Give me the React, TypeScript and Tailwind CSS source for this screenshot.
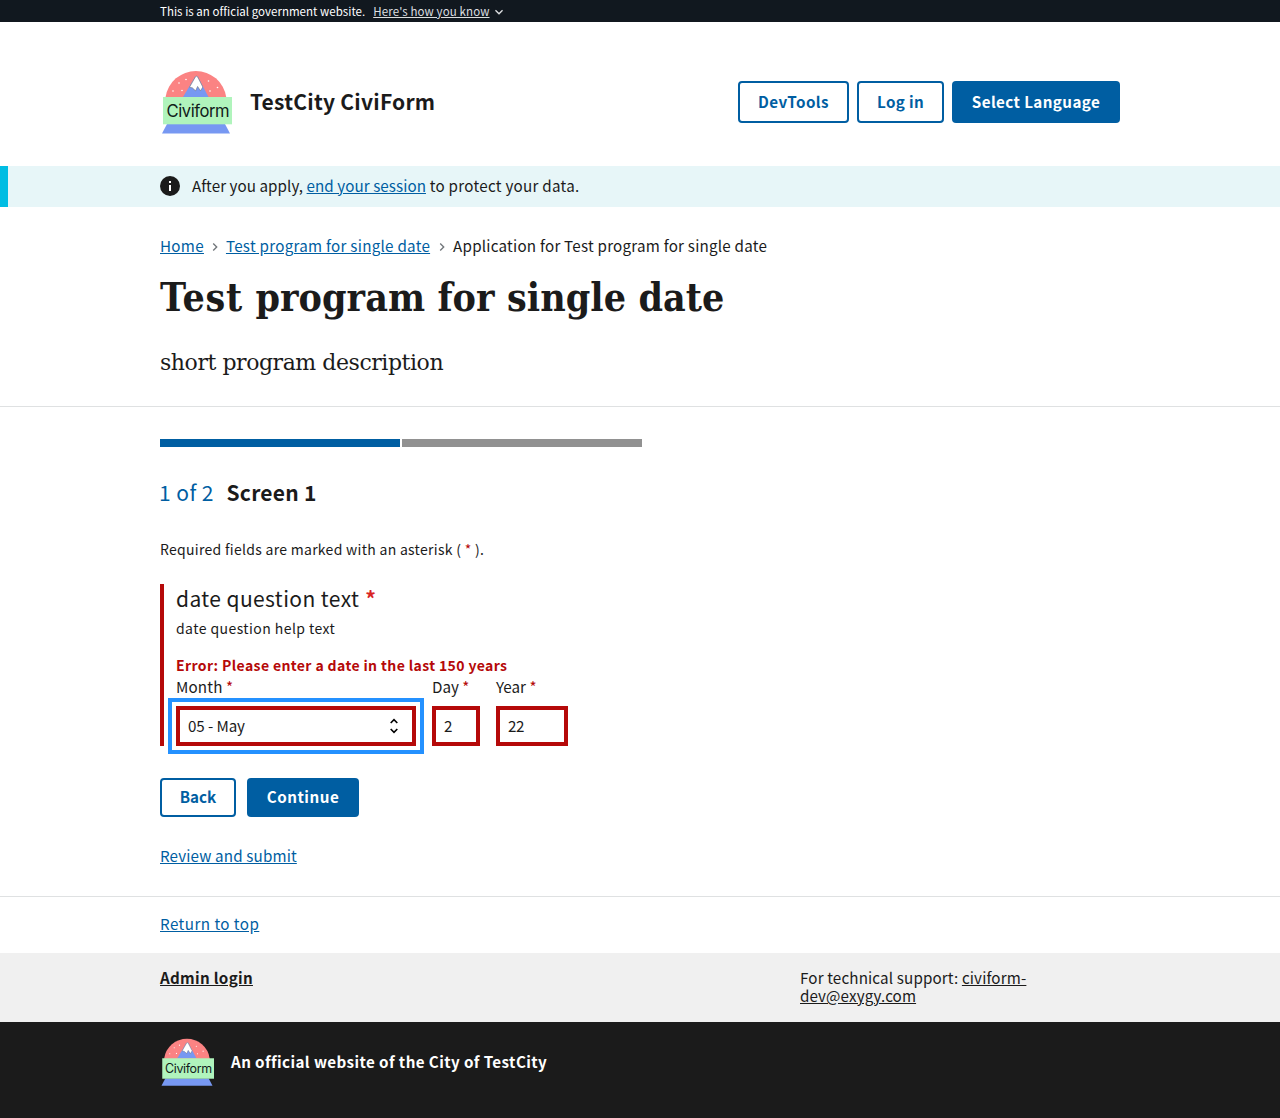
import type { ReactNode } from 'react';

function Logo({ className }: { className: string }) {
  return (
    <svg viewBox="0 0 72 72" className={className} role="img" aria-label="Civiform">
      <path d="M5.6 32 V31 A30.65 30.65 0 0 1 66.2 31 V32 Z" fill="#fb8383" />
      <path d="M23 31 L35 11 Q36.5 9 38 11 L48.5 31 Z" fill="#7798f2" />
      <path d="M29.5 21.3 L35.4 10.9 Q36.5 9.4 37.6 10.9 L42.8 21 L40.5 24.8 L37.6 20.4 L35.6 24.8 L32.3 21.8 Z" fill="#fff" stroke="#666" strokeWidth="0.5" />
      <g fill="#fff">
        <circle cx="19" cy="17" r="0.8" />
        <circle cx="26" cy="13.5" r="0.8" />
        <circle cx="13" cy="25" r="0.8" />
        <circle cx="22" cy="24.5" r="0.8" />
        <circle cx="48.5" cy="15" r="0.8" />
        <circle cx="57.5" cy="21.5" r="0.8" />
        <circle cx="50" cy="25" r="0.8" />
      </g>
      <path d="M7 58 H65 L70 67.5 H2 Z" fill="#7798f2" />
      <rect x="3" y="31" width="69" height="27.3" fill="#b0f4bc" />
      <text x="6.6" y="51" textLength="63" fontFamily="Inter, sans-serif" fontSize="16.6" fill="#10201a">Civiform</text>
    </svg>
  );
}

function Container({ className = '', children }: { className?: string; children: ReactNode }) {
  return <div className={'mx-auto w-[960px] ' + className}>{children}</div>;
}

function Chevron({ className }: { className: string }) {
  return (
    <svg viewBox="0 0 24 24" className={className} fill="currentColor">
      <path d="M10 6 8.59 7.41 13.17 12l-4.58 4.59L10 18l6-6z" />
    </svg>
  );
}

const link = 'text-[#005ea2] underline underline-offset-1 ';
const outlineButton =
  'flex items-center justify-center rounded border-2 border-[#005ea2] bg-white font-bold text-[#005ea2] ';
const solidButton = 'flex items-center justify-center rounded bg-[#005ea2] font-bold text-white ';

export default function App() {
  return (
    <div className="h-[1118px] overflow-hidden bg-white font-['Noto_Sans_CJK_SC',sans-serif] text-[15.2px] leading-[18px] whitespace-nowrap text-[#1b1b1b]">
      <div className="h-[22px] bg-[#11181f] text-white">
        <Container className="flex h-[22px] items-center text-[11.5px]">
          <span className="tracking-[0.03px]">This is an official government website.</span>
          <a className="ml-2 tracking-[0.12px] text-[#dcdee0] underline underline-offset-1">Here's how you know</a>
          <Chevron className="mt-[2px] ml-[1px] size-4 rotate-90 text-[#dcdee0]" />
        </Container>
      </div>

      <header className="h-[144px]">
        <Container className="flex items-center pt-[44px]">
          <Logo className="size-[72px]" />
          <span className="ml-[18px] pb-[2px] text-[21px] font-bold tracking-[0.24px]">TestCity CiviForm</span>
          <div className="ml-auto flex gap-2">
            <button className={outlineButton + 'h-[42px] w-[111px] pb-[2px] tracking-[0.45px]'}>DevTools</button>
            <button className={outlineButton + 'h-[42px] w-[87px] pb-[2px] tracking-[0.35px]'}>Log in</button>
            <button className={solidButton + 'h-[42px] w-[168px] pb-[2px] tracking-[0.4px]'}>Select Language</button>
          </div>
        </Container>
      </header>

      <section className="h-[41px] border-l-8 border-[#00bde3] bg-[#e7f6f8]">
        <div className="flex h-full items-center pb-px pl-[152px]">
          <svg viewBox="0 0 20 20" className="mr-3 size-5">
            <circle cx="10" cy="10" r="10" fill="#1b1b1b" />
            <path d="M9 5h2v2H9zM9 9h2v6H9z" fill="#fff" />
          </svg>
          <p className="pb-[3px] tracking-[0.06px]">
            After you apply, <a className={link}>end your session</a>
            <span className="tracking-[0.27px]"> to protect your data.</span>
          </p>
        </div>
      </section>

      <section className="h-[200px] border-b border-[#dfe1e2]">
        <Container className="pt-[29px]">
          <nav className="flex h-[18px] items-center">
            <a className={link + 'tracking-[0.3px]'}>Home</a>
            <Chevron className="mx-[3px] mt-[3px] size-4 text-[#71767a]" />
            <a className={link + 'tracking-[0.26px]'}>Test program for single date</a>
            <Chevron className="mr-[3px] ml-1 mt-[3px] size-4 text-[#71767a]" />
            <span className="tracking-[0.22px]">Application for Test program for single date</span>
          </nav>
          <h1 className="mt-[19px] h-[48px] font-['DejaVu_Serif_Condensed','DejaVu_Serif',serif] text-[39px] leading-[48px] font-bold tracking-[0.07px]">
            <span className="tracking-[0.8px]">Test</span> program for single date
          </h1>
          <p className="mt-[27px] h-[30px] font-['DejaVu_Serif',serif] text-[22px] leading-[30px] tracking-[-0.44px]">
            short program description
          </p>
        </Container>
      </section>

      <main className="h-[490px] border-b border-[#dfe1e2]">
        <Container className="pt-8">
          <div className="flex gap-[2px]">
            <div className="h-2 w-60 bg-[#005ea2]" />
            <div className="h-2 w-60 bg-[#919191]" />
          </div>
          <h2 className="mt-[30px] -ml-px flex h-[30px] items-center text-[21px]">
            <span className="tracking-[0.45px] text-[#005ea2]">1 of 2</span>
            <span className="ml-[12.5px] font-bold tracking-[0.25px]">Screen 1</span>
          </h2>
          <p className="mt-[33px] h-[18px] text-[14px] tracking-[0.29px]">
            Required fields are marked with an asterisk ( <span className="text-[#b50909]">*</span> ).
          </p>

          <div className="mt-[26px] h-[162px] border-l-4 border-[#b50909] pl-3">
            <h3 className="flex h-[28px] items-center text-[21px] tracking-[0.4px]">
              date question text <span className="ml-[6px] font-bold text-[#d92525]">*</span>
            </h3>
            <p className="mt-[7px] h-[18px] text-[14px] tracking-[0.43px]">date question help text</p>
            <p className="mt-[19px] h-[18px] text-[14px] font-bold tracking-[0.38px] text-[#b50909]">
              Error: Please enter a date in the last 150 years
            </p>
            <div className="mt-[3px] flex gap-4">
              <label className="w-60">
                <span className="block h-[18px] tracking-[0.15px]">
                  Month <span className="text-[#b50909]">*</span>
                </span>
                <span className="mt-[11px] flex h-10 items-center justify-between border-4 border-[#b50909] pr-[14px] pl-2 outline-4 outline-offset-4 outline-[#2491ff]">
                  <span className="pb-[2px] tracking-[-0.1px]">05 - May</span>
                  <svg viewBox="0 0 8 16" className="h-4 w-2" fill="none" stroke="#000" strokeWidth="1.6">
                    <path d="M0.7 5 4 1.6 7.3 5M0.7 11 4 14.4 7.3 11" />
                  </svg>
                </span>
              </label>
              <label className="w-12">
                <span className="block h-[18px]">
                  Day <span className="text-[#b50909]">*</span>
                </span>
                <span className="mt-[11px] flex h-10 items-center border-4 border-[#b50909] pb-[2px] pl-2">2</span>
              </label>
              <label className="w-[72px]">
                <span className="block h-[18px]">
                  Year <span className="text-[#b50909]">*</span>
                </span>
                <span className="mt-[11px] flex h-10 items-center border-4 border-[#b50909] pb-[2px] pl-2 tracking-[-0.4px]">22</span>
              </label>
            </div>
          </div>

          <div className="mt-8 flex gap-[11px]">
            <button className={outlineButton + 'h-[39px] w-[76px] pb-1'}>Back</button>
            <button className={solidButton + 'h-[39px] w-[112px] pb-1 tracking-[0.5px]'}>Continue</button>
          </div>
          <p className="mt-[29px]">
            <a className={link + 'tracking-[0.14px]'}>Review and submit</a>
          </p>
        </Container>
      </main>

      <footer>
        <Container className="h-[56px] pt-[17px]">
          <a className={link + 'tracking-[0.45px]'}>Return to top</a>
        </Container>
        <div className="h-[69px] bg-[#f0f0f0]">
          <Container className="flex pt-[15px]">
            <a className="w-[640px] font-bold tracking-[0.3px] underline underline-offset-1">Admin login</a>
            <p className="tracking-[0.14px]">
              For technical support: <a className="underline underline-offset-1">civiform-<br />
              <span className="tracking-[0.1px]">dev@exygy.com</span></a>
            </p>
          </Container>
        </div>
        <div className="h-24 bg-[#1b1b1b] text-white">
          <Container className="flex pt-[13px]">
            <Logo className="size-[54px]" />
            <span className="mt-[17px] ml-[17px] font-bold tracking-[0.4px]">An official website of the City of TestCity</span>
          </Container>
        </div>
      </footer>
    </div>
  );
}
